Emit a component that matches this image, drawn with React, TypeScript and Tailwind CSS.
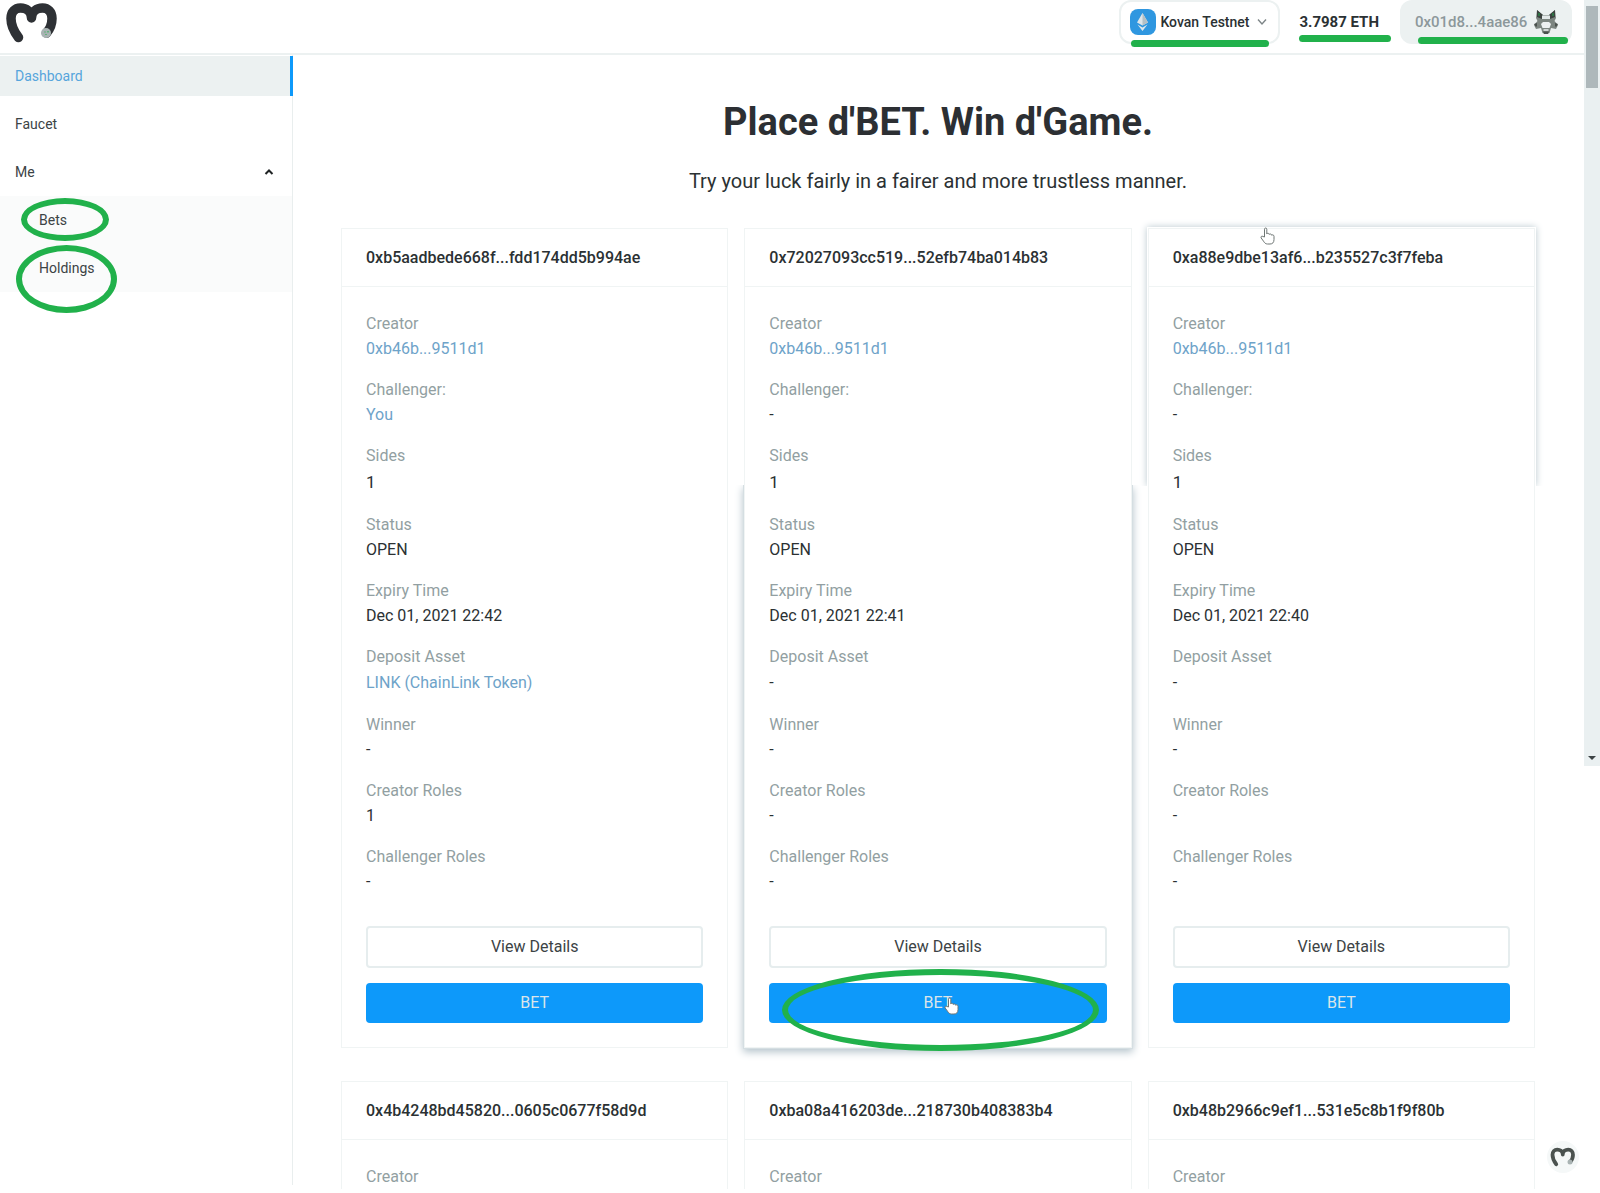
import React from "react";

const rows = ["Creator", "Challenger:", "Sides", "Status", "Expiry Time", "Deposit Asset", "Winner", "Creator Roles", "Challenger Roles"];

const valueStyles: Record<string, string> = {
  Sides: "text-[17px] leading-7",
  "Deposit Asset": "leading-[27px]",
};

type Bet = { id: string; values: string[]; hover?: "top" | "bottom" };

const bets: Bet[] = [
  { id: "0xb5aadbede668f...fdd174dd5b994ae", values: ["0xb46b...9511d1", "You", "1", "OPEN", "Dec 01, 2021 22:42", "LINK (ChainLink Token)", "-", "1", "-"] },
  { id: "0x72027093cc519...52efb74ba014b83", hover: "bottom", values: ["0xb46b...9511d1", "-", "1", "OPEN", "Dec 01, 2021 22:41", "-", "-", "-", "-"] },
  { id: "0xa88e9dbe13af6...b235527c3f7feba", hover: "top", values: ["0xb46b...9511d1", "-", "1", "OPEN", "Dec 01, 2021 22:40", "-", "-", "-", "-"] },
];

const nextBets = ["0x4b4248bd45820...0605c0677f58d9d", "0xba08a416203de...218730b408383b4", "0xb48b2966c9ef1...531e5c8b1f9f80b"];

function Logo({ className, muted }: { className: string; muted?: boolean }) {
  return (
    <svg viewBox="0 0 52 40" className={className} fill="none" aria-hidden="true">
      <path
        d="M12.500 34.500C9 30 5 22 5 15.500C5 9 9 5 14.500 5C20 5 25.500 8.500 25.500 15C25.500 8.500 31 5 36.500 5C42 5 46 9 46 15.500C46 21 44 26 40.500 30"
        stroke={muted ? "#4b524f" : "#2e3135"}
        strokeWidth={muted ? 7.5 : 9.5}
        strokeLinecap="round"
        strokeLinejoin="round"
      />
      <circle cx="40" cy="30" r="5" fill="#a9b3b3" />
      {!muted && <path d="M38.500 29h1m2 0h1m-3 2.500h1m1-3h1" stroke="#21b14b" strokeWidth="1.200" />}
    </svg>
  );
}

function EthIcon() {
  return (
    <svg viewBox="0 0 26 26" className="h-[26px] w-[26px] shrink-0" aria-hidden="true">
      <rect width="26" height="26" rx="8" fill="#2f97e0" />
      <path d="M12.500 4L18 13.500L12.500 16.500L7 13.500Z" fill="#dfe6ea" />
      <path d="M12.500 4V16.500L18 13.500Z" fill="#b4c0c6" />
      <path d="M7.500 15.500L12.500 18.500L17.500 15.500L12.500 22Z" fill="#dfe6ea" />
    </svg>
  );
}

function FoxIcon() {
  return (
    <svg viewBox="0 0 24 24" className="h-6 w-6 shrink-0" aria-hidden="true">
      <path d="M3 0L9 5H15L21 0L22 8L20.500 11L24 15L22 19L17 18L15.500 23L12 24L8.500 23L7 18L2 19L0 15L3.500 11L2 8Z" fill="#7c8580" />
      <path d="M3 0L9 5L8 9L3 7ZM21 0L15 5L16 9L21 7Z" fill="#3c433f" />
      <path d="M5 3v3M19 3v3" stroke="#21a04b" strokeWidth="1" />
      <path d="M8 5.500H16V9H8Z" fill="#e3e9e9" />
      <path d="M7 14L9 12H15L17 14L15.500 18H8.500Z" fill="#edf1f1" />
      <path d="M0 14L3 13V16L2 17ZM24 14L21 13V16L22 17ZM9 21.500H15L14 24H10Z" fill="#4a514d" />
      <path d="M9.500 20h5" stroke="#edf1f1" strokeWidth="1.500" />
    </svg>
  );
}

function HandCursor({ className }: { className: string }) {
  return (
    <svg viewBox="0 0 18 18" className={className} aria-hidden="true">
      <path
        d="M5.500 10V2.200C5.500.6 7.800.6 7.800 2.200V7C8 6 10.200 6 10.200 7.500C10.500 6.600 12.600 6.800 12.600 8.200C13.200 7.500 15 7.800 15 9.300V12.500C15 15.500 13.500 17 11 17H8.500C6.500 17 5.500 15.800 4.500 14.200L2.200 11C1.300 9.600 3 8.600 4 9.500Z"
        fill="#fff"
        stroke="#6f7775"
        strokeWidth="1"
        strokeLinejoin="round"
      />
    </svg>
  );
}

function Ring({ className }: { className: string }) {
  return <span aria-hidden="true" className={`pointer-events-none absolute rounded-[50%] border-6 border-[#21b14b] ${className}`} />;
}

function Underline({ className }: { className: string }) {
  return <span aria-hidden="true" className={`pointer-events-none absolute h-[7px] rounded-full bg-[#21b14b] ${className}`} />;
}

function Header() {
  return (
    <header className="flex h-[55px] shrink-0 items-start justify-between border-b-2 border-[#ecf1f1]">
      <a href="#home" aria-label="Home" className="mt-[3px] ml-1.5">
        <Logo className="h-10 w-[52px]" />
      </a>
      <div className="flex items-start pr-3">
        <div className="relative">
          <button className="flex h-11 w-[161px] items-center rounded-xl border-2 border-[#ecf1f1] pl-[9px] text-sm font-medium text-[#2b3133]">
            <EthIcon />
            <span className="ml-1">Kovan Testnet</span>
            <svg viewBox="0 0 10 8" className="ml-2 h-2 w-2.5" fill="none" aria-hidden="true">
              <path d="M1 1.500L5 6L9 1.500" stroke="#7d8587" strokeWidth="1.400" />
            </svg>
          </button>
          <Underline className="top-10 right-[11px] left-3" />
        </div>
        <div className="relative mr-[21px] ml-[19px] flex h-11 items-center text-[15px] font-bold text-[#2b3133]">
          3.7987 ETH
          <Underline className="top-[35px] -right-3 left-0" />
        </div>
        <div className="relative">
          <button className="flex h-11 w-[172px] items-center justify-between rounded-xl bg-[#ecf1f1] pr-3.5 pl-[15px] text-[15px] font-medium text-[#8c989b]">
            0x01d8...4aae86
            <FoxIcon />
          </button>
          <Underline className="top-[37px] right-1 left-[18px]" />
        </div>
      </div>
    </header>
  );
}

function Sidebar() {
  return (
    <nav className="flex w-[293px] shrink-0 flex-col border-r border-[#e9eeee] pt-px text-sm text-[#3c4345]">
      <a href="#dashboard" className="-mr-px flex h-10 items-center border-r-3 border-[#0d99fa] bg-[#ecf1f1] pl-[15px] text-[#56a5dc]">Dashboard</a>
      <a href="#faucet" className="mt-2 flex h-10 items-center pl-[15px]">Faucet</a>
      <button className="mt-2 flex h-10 items-center justify-between pr-[18px] pl-[15px]">
        Me
        <svg viewBox="0 0 10 8" className="h-2 w-2.5" fill="none" aria-hidden="true">
          <path d="M1.500 6L5 2.500L8.500 6" stroke="#202425" strokeWidth="2" />
        </svg>
      </button>
      <div className="mt-1 flex flex-col gap-2 bg-[#fafbfb] py-1">
        <a href="#bets" className="relative flex h-10 items-center pl-[39px]">
          Bets
          <Ring className="top-[-2px] left-[21px] h-[43px] w-[88px]" />
        </a>
        <a href="#holdings" className="relative flex h-10 items-center pl-[39px]">
          Holdings
          <Ring className="top-[-3px] left-4 h-[68px] w-[101px]" />
        </a>
      </div>
    </nav>
  );
}

function CardTitle({ id }: { id: string }) {
  return <h2 className="flex h-[58px] items-center border-b border-[#f0f4f4] px-6 text-base font-medium text-[#2b3133]">{id}</h2>;
}

function BetCard({ bet }: { bet: Bet }) {
  return (
    <article className="relative border border-[#f0f4f4]">
      {bet.hover === "top" && (
        <span aria-hidden="true" className="pointer-events-none absolute -inset-x-0.5 -top-0.5 h-[259px] shadow-[0_0_7px_#b9c8cf] [clip-path:inset(-8px_-8px_0_-8px)]" />
      )}
      {bet.hover === "bottom" && (
        <span aria-hidden="true" className="pointer-events-none absolute -inset-x-0.5 top-[256px] -bottom-0.5 border border-t-0 border-[#d5dee2] shadow-[0_3px_8px_#b4c3cb] [clip-path:inset(0_-12px_-14px_-12px)]" />
      )}
      <div className="relative bg-white">
        <CardTitle id={bet.id} />
        <div className="p-6">
          <dl className="flex flex-col gap-4">
            {rows.map((label, i) => {
              const value = bet.values[i];
              const linked = value === "You" || value.startsWith("0x") || value.startsWith("LINK");
              return (
                <div key={label} className="text-base leading-[25px]">
                  <dt className="text-[#929fa2]">{label}</dt>
                  <dd className={valueStyles[label]}>
                    {linked ? <a href="#address" className="text-[#6ea3c9]">{value}</a> : value}
                  </dd>
                </div>
              );
            })}
          </dl>
          <button className="mt-8 block h-[42px] w-full rounded-sm border-2 border-[#e6edee] text-base text-[#3c4345]">View Details</button>
          <div className="relative mt-[15px]">
            <button className="block h-10 w-full rounded-sm bg-[#0d99fa] text-base text-[#dbe5ea]">BET</button>
            {bet.hover === "bottom" && (
              <>
                <HandCursor className="absolute top-[14px] left-[174px] h-[18px] w-[18px]" />
                <Ring className="-top-3.5 right-2 left-[13px] h-[82px]" />
              </>
            )}
          </div>
        </div>
      </div>
      {bet.hover === "top" && <HandCursor className="absolute -top-0.5 left-[110px] h-[18px] w-[18px]" />}
    </article>
  );
}

function NextBetCard({ id }: { id: string }) {
  return (
    <article className="border border-b-0 border-[#f0f4f4]">
      <CardTitle id={id} />
      <p className="px-6 pt-6 text-base leading-[25px] text-[#929fa2]">Creator</p>
    </article>
  );
}

export default function App() {
  return (
    <div className="flex h-screen overflow-hidden bg-white pb-2 font-['Roboto',sans-serif] text-[#2b3133]">
      <div className="flex min-w-0 flex-1 flex-col">
        <Header />
        <div className="flex min-h-0 flex-1">
          <Sidebar />
          <main className="min-w-0 flex-1 pt-11 pr-[49px] pl-12">
            <h1 className="text-center text-[38px] leading-[46px] font-bold text-[#2c2f33]">Place d'BET. Win d'Game.</h1>
            <p className="mt-[21px] text-center text-xl leading-[30px]">Try your luck fairly in a fairer and more trustless manner.</p>
            <div className="mt-8 grid grid-cols-3 gap-x-4 gap-y-[33px]">
              {bets.map((bet) => <BetCard key={bet.id} bet={bet} />)}
              {nextBets.map((id) => <NextBetCard key={id} id={id} />)}
            </div>
          </main>
        </div>
      </div>
      <div aria-hidden="true" className="flex h-[766px] w-4 shrink-0 flex-col items-center justify-between bg-[#eaf0f1] pt-1.5 pb-1.5">
        <span className="h-[82px] w-3 bg-[#aeb8bb]" />
        <svg viewBox="0 0 8 4" className="h-1 w-2"><path d="M0 0H8L4 4Z" fill="#3c4345" /></svg>
      </div>
      <button aria-label="Moralis" className="absolute right-[21px] bottom-5 flex h-8 w-8 items-center justify-center rounded-full bg-[#f5f8f8]">
        <Logo muted className="h-5 w-[26px]" />
      </button>
    </div>
  );
}
